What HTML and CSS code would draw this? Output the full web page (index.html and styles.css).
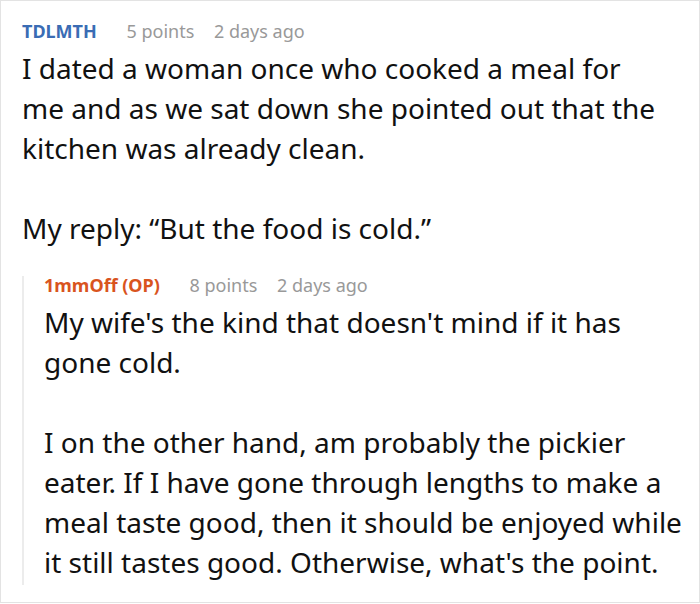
FILE: index.html
```html
<!DOCTYPE html>
<html>
<head>
<meta charset="utf-8">
<link rel="stylesheet" href="styles.css">
</head>
<body>
<div class="thread">
  <div class="comment">
    <div class="meta">
      <span class="author">TDLMTH</span>
      <span class="points">5 points</span>
      <span class="time">2 days ago</span>
    </div>
    <div class="body main-body">
      <p>I dated a woman once who cooked a meal for me and as we sat down she pointed out that the kitchen was already clean.</p>
      <p>My reply: “But the food is cold.”</p>
    </div>
    <div class="reply">
      <div class="meta">
        <span class="author op">1mmOff (OP)</span>
        <span class="points">8 points</span>
        <span class="time">2 days ago</span>
      </div>
      <div class="body">
        <p>My wife's the kind that doesn't mind if it has gone cold.</p>
        <p>I on the other hand, am probably the pickier eater. If I have gone through lengths to make a meal taste good, then it should be enjoyed while it still tastes good. Otherwise, what's the point.</p>
      </div>
    </div>
  </div>
</div>
</body>
</html>
```

FILE: styles.css
```css
html, body {
  margin: 0;
  padding: 0;
  background: #fff;
}
.thread {
  box-sizing: border-box;
  width: 700px;
  height: 603px;
  border: 1px solid #e3e3e3;
  overflow: hidden;
  padding: 21px 14px 0 21px;
  font-family: "Noto Sans", "Open Sans", sans-serif;
  color: #111;
}
.meta {
  font-size: 18px;
  line-height: 18px;
  height: 18px;
  white-space: nowrap;
}
.author {
  font-weight: bold;
  color: #3a6cb4;
  margin-right: 25px;
}
.author.op {
  color: #d9541e;
}
.points, .time {
  color: #999;
}
.points {
  margin-right: 15px;
}
.body {
  margin-top: 8px;
  font-size: 28px;
  line-height: 40px;
}
.main-body {
  width: 638px;
}
.body p {
  margin: 0 0 40px 0;
}
.body p:last-child {
  margin-bottom: 0;
}
.reply {
  margin-top: 28px;
  border-left: 2px solid #ececec;
  padding-left: 20px;
  padding-bottom: 3px;
}
```
